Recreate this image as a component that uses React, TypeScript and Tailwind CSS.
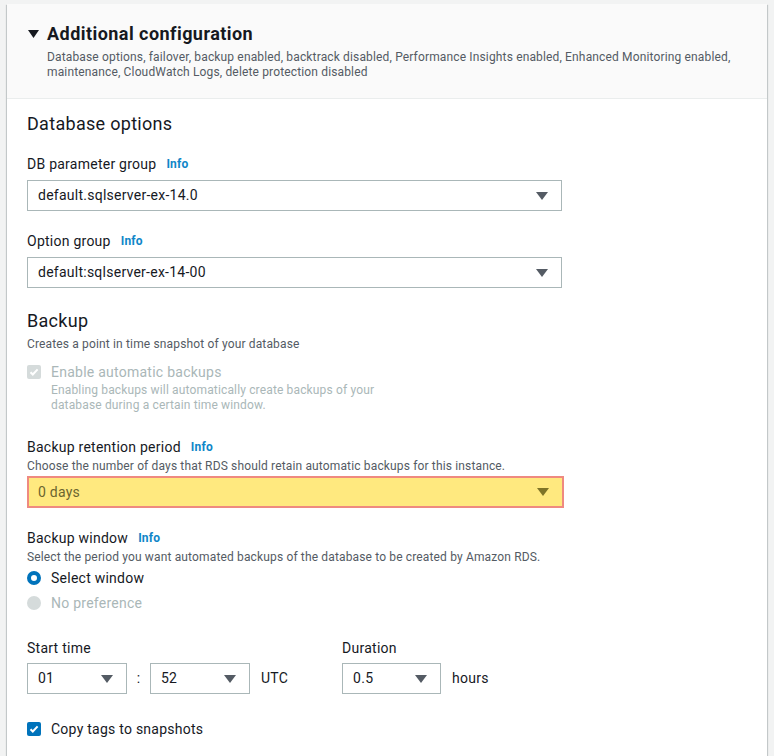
import type { ReactNode } from 'react';

const font = { fontFamily: 'Roboto, "Noto Sans", Arial, sans-serif' };

function Caret({ className = 'text-[#545b64]' }: { className?: string }) {
  return (
    <svg width="12" height="8" viewBox="0 0 12 8" className={className}>
      <path d="M0 0h12L6 8z" fill="currentColor" />
    </svg>
  );
}

function Info() {
  return <span className="ml-[10px] text-[12px] font-bold tracking-[0.2px] text-[#0f86c8]">Info</span>;
}

function Select({ value, className = '' }: { value: string; className?: string }) {
  return (
    <div
      className={`flex h-[31px] items-center justify-between border border-[#aab7b8] bg-white pl-[10px] pr-[13px] text-[14px] tracking-[0.25px] text-[#16191f] ${className}`}
    >
      <span>{value}</span>
      <Caret />
    </div>
  );
}

function Label({ children, info }: { children: ReactNode; info?: boolean }) {
  return (
    <div className="flex items-center text-[14px] leading-[20px] tracking-[0.25px] text-[#16191f]">
      {children}
      {info && <Info />}
    </div>
  );
}

function Check({ color }: { color: string }) {
  return (
    <span className={`flex h-[14px] w-[14px] items-center justify-center rounded-[2px] ${color}`}>
      <svg width="10" height="10" viewBox="0 0 10 10">
        <path d="M1.5 5.2l2.3 2.3L8.6 2.4" fill="none" stroke="white" strokeWidth="2" />
      </svg>
    </span>
  );
}

export default function App() {
  return (
    <div className="min-h-[756px] bg-[#f2f3f3] pl-[7px] pt-[4px]" style={font}>
      <div className="w-[760px] bg-white shadow-[0_1px_1px_0_rgba(0,28,36,0.3),1px_1px_1px_0_rgba(0,28,36,0.15),-1px_1px_1px_0_rgba(0,28,36,0.15)]">
        <div className="border-b border-[#eaeded] bg-[#fafafa] pb-[18px] pl-[21px] pr-[20px] pt-[18px]">
          <div className="flex items-center text-[18px] font-bold leading-[24px] tracking-[0.45px] text-[#16191f]">
            <svg width="11" height="8" viewBox="0 0 11 8" className="mr-[8px]">
              <path d="M0 0h11L5.5 8z" fill="#16191f" />
            </svg>
            Additional configuration
          </div>
          <p className="mt-[4px] pl-[19px] text-[12px] leading-[15px] tracking-[0.15px] text-[#545b64]">
            Database options, failover, backup enabled, backtrack disabled, Performance Insights enabled, Enhanced Monitoring enabled,
            maintenance, CloudWatch Logs, delete protection disabled
          </p>
        </div>

        <div className="pb-[20px] pl-[20px] pr-[20px] pt-[13px] tracking-[0.15px]">
          <h2 className="text-[18px] leading-[24px] tracking-[0.3px] text-[#16191f]">Database options</h2>

          <div className="mt-[18px] w-[535px]">
            <Label info>DB parameter group</Label>
            <Select value="default.sqlserver-ex-14.0" className="mt-[6px]" />
          </div>

          <div className="mt-[20px] w-[535px]">
            <Label info>Option group</Label>
            <Select value="default:sqlserver-ex-14-00" className="mt-[6px]" />
          </div>

          <h2 className="mt-[21px] text-[18px] leading-[24px] tracking-[0.3px] text-[#16191f]">Backup</h2>
          <p className="mt-[3px] text-[12px] leading-[16px] text-[#545b64]">Creates a point in time snapshot of your database</p>

          <div className="mt-[10px] flex gap-[10px]">
            <div className="pt-[3px]">
              <Check color="bg-[#d5dbdb]" />
            </div>
            <div>
              <div className="text-[14px] leading-[20px] tracking-[0.25px] text-[#aab7b8]">Enable automatic backups</div>
              <div className="mt-[1px] text-[12px] leading-[15px] text-[#aab7b8]">
                Enabling backups will automatically create backups of your
                <br />
                database during a certain time window.
              </div>
            </div>
          </div>

          <div className="mt-[24px] w-[537px]">
            <Label info>Backup retention period</Label>
            <p className="text-[12px] leading-[18px] text-[#545b64]">
              Choose the number of days that RDS should retain automatic backups for this instance.
            </p>
            <div className="mt-[1px] flex h-[32px] items-center justify-between border-2 border-[#ef8a80] bg-[#ffe97f] pl-[9px] pr-[13px] text-[14px] tracking-[0.25px] text-[#6b6530]">
              <span>0 days</span>
              <Caret className="text-[#7f7427]" />
            </div>
          </div>

          <div className="mt-[20px]">
            <Label info>Backup window</Label>
            <p className="text-[12px] leading-[18px] text-[#545b64]">
              Select the period you want automated backups of the database to be created by Amazon RDS.
            </p>
            <div className="mt-[2px] flex items-center gap-[10px] text-[14px] leading-[20px] tracking-[0.25px] text-[#16191f]">
              <span className="h-[14px] w-[14px] rounded-full border-[4px] border-[#0073bb] bg-white" />
              Select window
            </div>
            <div className="mt-[5px] flex items-center gap-[10px] text-[14px] leading-[20px] tracking-[0.25px] text-[#aab7b8]">
              <span className="h-[14px] w-[14px] rounded-full bg-[#d5dbdb]" />
              No preference
            </div>
          </div>

          <div className="mt-[25px] flex gap-[54px]">
            <div>
              <Label>Start time</Label>
              <div className="mt-[5px] flex items-center text-[14px] tracking-[0.25px] text-[#16191f]">
                <Select value="01" className="w-[100px]" />
                <span className="w-[23px] text-center">:</span>
                <Select value="52" className="w-[100px]" />
                <span className="ml-[11px]">UTC</span>
              </div>
            </div>
            <div>
              <Label>Duration</Label>
              <div className="mt-[5px] flex items-center text-[14px] tracking-[0.25px] text-[#16191f]">
                <Select value="0.5" className="w-[99px]" />
                <span className="ml-[11px]">hours</span>
              </div>
            </div>
          </div>

          <div className="mt-[25px] flex items-center gap-[10px] text-[14px] leading-[20px] tracking-[0.25px] text-[#16191f]">
            <Check color="bg-[#0073bb]" />
            Copy tags to snapshots
          </div>
        </div>
      </div>
    </div>
  );
}
